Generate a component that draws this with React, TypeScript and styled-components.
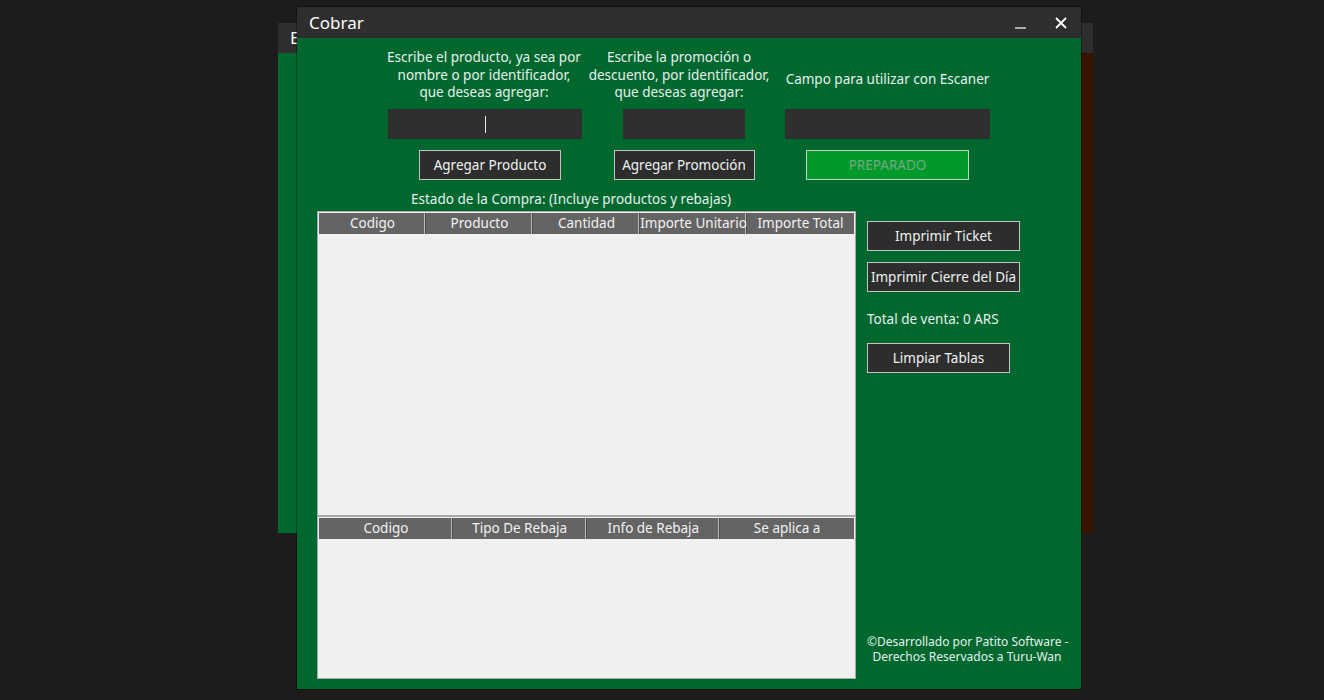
import React from 'react';
import styled, { createGlobalStyle } from 'styled-components';

const GlobalStyle = createGlobalStyle`
  html, body {
    margin: 0;
    padding: 0;
    background: #1c1c1c;
  }
  body {
    font-family: "Noto Sans", "Open Sans", sans-serif;
  }
`;

const Desktop = styled.div`
  position: relative;
  width: 1324px;
  height: 700px;
  overflow: hidden;
  background: #1c1c1c;
`;

const BackWindow = styled.div`
  position: absolute;
  left: 278px;
  top: 23px;
  width: 815px;
  height: 510px;
  display: flex;
  flex-direction: column;
`;

const BackTitle = styled.div`
  height: 30px;
  background: #2e2e2e;
  color: #ffffff;
  font-size: 17px;
  line-height: 30px;
  padding-left: 12px;
`;

const BackBody = styled.div`
  flex: 1;
  display: flex;
  background: #00672f;
`;

const BackFill = styled.div`
  flex: 1;
`;

const BackSide = styled.div`
  width: 40px;
  background: #361400;
`;

const FrontWindow = styled.div`
  position: absolute;
  left: 297px;
  top: 7px;
  width: 784px;
  height: 682px;
  display: flex;
  flex-direction: column;
  box-shadow: 0 0 0 1px rgba(0, 0, 0, 0.35);
`;

const TitleBar = styled.div`
  height: 31px;
  background: #2e2e2e;
  display: flex;
  align-items: center;
  padding-left: 12px;
`;

const TitleText = styled.div`
  flex: 1;
  color: #ffffff;
  font-size: 17px;
  margin-top: -1px;
`;

const TitleButton = styled.div`
  width: 40px;
  height: 31px;
  display: flex;
  align-items: center;
  justify-content: center;
`;

const Body = styled.div`
  flex: 1;
  background: #00672f;
  color: #e6f1ec;
  font-size: 13.5px;
  display: flex;
  flex-direction: column;
  padding-top: 11px;
`;

const TopGrid = styled.div`
  display: grid;
  grid-template-columns: 210px 168px 215px;
  column-gap: 11px;
  margin-left: 83px;
`;

const FieldCol = styled.div`
  display: flex;
  flex-direction: column;
  align-items: center;
`;

const FieldLabel = styled.div<{ $offset?: number; $shift?: number }>`
  height: 52px;
  box-sizing: border-box;
  padding-top: ${p => p.$offset ?? 0}px;
  margin-left: ${p => (p.$shift ?? 0) * 2}px;
  line-height: 17.5px;
  text-align: center;
  white-space: nowrap;
`;

const InputBox = styled.div<{ $w: number; $shift?: number }>`
  margin-top: 8px;
  margin-left: ${p => (p.$shift ?? 0) * 2}px;
  width: ${p => p.$w}px;
  height: 30px;
  background: #2f2f2f;
  display: flex;
  align-items: center;
  justify-content: center;
`;

const Caret = styled.span`
  width: 1px;
  height: 17px;
  background: #e8e8e8;
`;

const ActionButton = styled.div<{ $w: number; $ready?: boolean; $shift?: number }>`
  margin-top: 11px;
  margin-left: ${p => (p.$shift ?? 0) * 2}px;
  width: ${p => p.$w}px;
  height: 30px;
  box-sizing: border-box;
  border: 1px solid ${p => (p.$ready ? '#b9d9c2' : '#c4c4c4')};
  background: ${p => (p.$ready ? '#009a2b' : '#2d2d2d')};
  color: ${p => (p.$ready ? '#73a983' : '#eef3f1')};
  display: flex;
  align-items: center;
  justify-content: center;
  font-size: 13.5px;
  white-space: nowrap;
`;

const Lower = styled.div`
  flex: 1;
  display: flex;
  margin-top: 10px;
  margin-left: 20px;
  padding-bottom: 10px;
`;

const LeftCol = styled.div`
  width: 539px;
  display: flex;
  flex-direction: column;
`;

const SectionLabel = styled.div`
  height: 18px;
  line-height: 18px;
  padding-left: 94px;
  margin-bottom: 3px;
  white-space: nowrap;
`;

const Table = styled.div<{ $h: number }>`
  height: ${p => p.$h}px;
  box-sizing: border-box;
  border: 1px solid #a9a9a9;
  padding: 1px;
  background: #f0f0f0;
`;

const HeaderRow = styled.div<{ $cols: number }>`
  display: grid;
  grid-template-columns: repeat(${p => p.$cols}, 1fr);
  height: 21px;
  background: #646464;
`;

const HeaderCell = styled.div`
  color: #f2f2f2;
  font-size: 13.5px;
  line-height: 21px;
  text-align: center;
  white-space: nowrap;
  overflow: hidden;
  box-shadow: inset -1px 0 0 #4a4a4a, inset -2px 0 0 #b8b8b8;

  &:last-child {
    box-shadow: none;
  }
`;

const RightCol = styled.div`
  margin-left: 11px;
  width: 200px;
  display: flex;
  flex-direction: column;
  align-items: flex-start;
  padding-top: 31px;
`;

const SideButton = styled(ActionButton)`
  margin-top: 0;
  margin-bottom: 11px;
`;

const TotalText = styled.div`
  margin-top: 7px;
  height: 18px;
  line-height: 18px;
  margin-bottom: 15px;
`;

const Footer = styled.div`
  margin-top: auto;
  margin-bottom: 15px;
  align-self: stretch;
  text-align: center;
  font-size: 12px;
  line-height: 15px;
  white-space: nowrap;
`;

const productCols = ['Codigo', 'Producto', 'Cantidad', 'Importe Unitario', 'Importe Total'];
const rebateCols = ['Codigo', 'Tipo De Rebaja', 'Info de Rebaja', 'Se aplica a'];

const MinimizeIcon = () => (
  <svg width="12" height="12" viewBox="0 0 12 12">
    <line x1="0" y1="11" x2="11" y2="11" stroke="#ffffff" strokeWidth="1.2" />
  </svg>
);

const CloseIcon = () => (
  <svg width="12" height="12" viewBox="0 0 12 12">
    <path d="M1 1 L11 11 M11 1 L1 11" stroke="#ffffff" strokeWidth="1.8" />
  </svg>
);

const App: React.FC = () => {
  return (
    <Desktop>
      <GlobalStyle />
      <BackWindow>
        <BackTitle>E</BackTitle>
        <BackBody>
          <BackFill />
          <BackSide />
        </BackBody>
      </BackWindow>

      <FrontWindow>
        <TitleBar>
          <TitleText>Cobrar</TitleText>
          <TitleButton>
            <MinimizeIcon />
          </TitleButton>
          <TitleButton>
            <CloseIcon />
          </TitleButton>
        </TitleBar>

        <Body>
          <TopGrid>
            <FieldCol>
              <FieldLabel $shift={-1}>
                Escribe el producto, ya sea por
                <br />
                nombre o por identificador,
                <br />
                que deseas agregar:
              </FieldLabel>
              <InputBox $w={194}>
                <Caret />
              </InputBox>
              <ActionButton $w={142} $shift={5}>
                Agregar Producto
              </ActionButton>
            </FieldCol>
            <FieldCol>
              <FieldLabel $shift={-6}>
                Escribe la promoción o
                <br />
                descuento, por identificador,
                <br />
                que deseas agregar:
              </FieldLabel>
              <InputBox $w={122} $shift={-1} />
              <ActionButton $w={141} $shift={-1}>
                Agregar Promoción
              </ActionButton>
            </FieldCol>
            <FieldCol>
              <FieldLabel $offset={22}>Campo para utilizar con Escaner</FieldLabel>
              <InputBox $w={205} />
              <ActionButton $w={163} $ready>
                PREPARADO
              </ActionButton>
            </FieldCol>
          </TopGrid>

          <Lower>
            <LeftCol>
              <SectionLabel>Estado de la Compra: (Incluye productos y rebajas)</SectionLabel>
              <Table $h={305}>
                <HeaderRow $cols={productCols.length}>
                  {productCols.map(c => (
                    <HeaderCell key={c}>{c}</HeaderCell>
                  ))}
                </HeaderRow>
              </Table>
              <Table $h={163}>
                <HeaderRow $cols={rebateCols.length}>
                  {rebateCols.map(c => (
                    <HeaderCell key={c}>{c}</HeaderCell>
                  ))}
                </HeaderRow>
              </Table>
            </LeftCol>

            <RightCol>
              <SideButton $w={153}>Imprimir Ticket</SideButton>
              <SideButton $w={153}>Imprimir Cierre del Día</SideButton>
              <TotalText>Total de venta: 0 ARS</TotalText>
              <SideButton $w={143}>Limpiar Tablas</SideButton>
              <Footer>
                ©Desarrollado por Patito Software -
                <br />
                Derechos Reservados a Turu-Wan
              </Footer>
            </RightCol>
          </Lower>
        </Body>
      </FrontWindow>
    </Desktop>
  );
};

export default App;
